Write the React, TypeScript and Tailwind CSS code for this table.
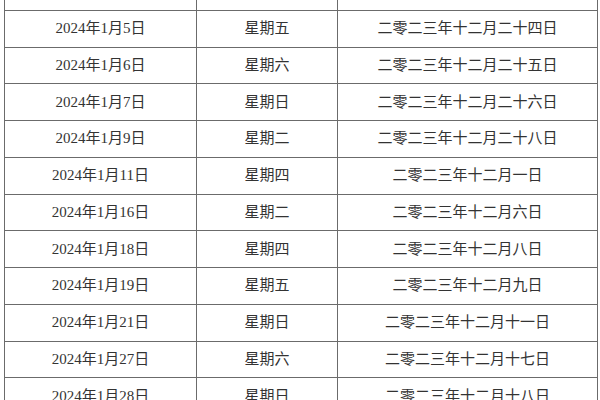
const rows: [string, string, string][] = [
  ['2024年1月4日', '星期四', '二零二三年十二月二十三日'],
  ['2024年1月5日', '星期五', '二零二三年十二月二十四日'],
  ['2024年1月6日', '星期六', '二零二三年十二月二十五日'],
  ['2024年1月7日', '星期日', '二零二三年十二月二十六日'],
  ['2024年1月9日', '星期二', '二零二三年十二月二十八日'],
  ['2024年1月11日', '星期四', '二零二三年十二月一日'],
  ['2024年1月16日', '星期二', '二零二三年十二月六日'],
  ['2024年1月18日', '星期四', '二零二三年十二月八日'],
  ['2024年1月19日', '星期五', '二零二三年十二月九日'],
  ['2024年1月21日', '星期日', '二零二三年十二月十一日'],
  ['2024年1月27日', '星期六', '二零二三年十二月十七日'],
  ['2024年1月28日', '星期日', '二零二三年十二月十八日'],
];

export default function App() {
  return (
    <div className="w-[600px] h-[400px] overflow-hidden bg-white">
      <table
        className="ml-[4px] -mt-[27px] border-collapse table-fixed w-[593px] text-[15px] text-[#333] [font-family:'Liberation_Serif','Noto_Sans_CJK_SC',serif]"
      >
        <colgroup>
          <col className="w-[192px]" />
          <col className="w-[141px]" />
          <col className="w-[260px]" />
        </colgroup>
        <tbody>
          {rows.map((r) => (
            <tr key={r[0]} className="h-[36.75px]">
              {r.map((cell, i) => (
                <td key={i} className="border border-[#6b6b6b] text-center p-0 leading-none">
                  {cell}
                </td>
              ))}
            </tr>
          ))}
        </tbody>
      </table>
    </div>
  );
}
